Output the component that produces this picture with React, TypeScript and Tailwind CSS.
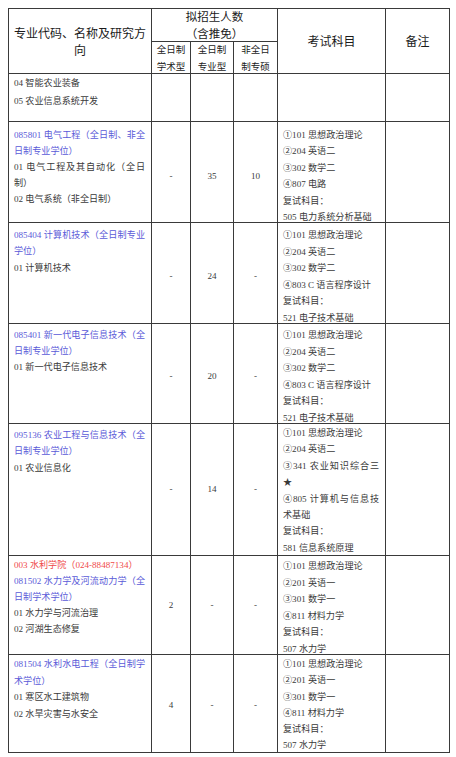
import React from "react";

type Line = { t: string; c?: "blue" | "red"; j?: boolean };
type Row = {
  h: string;
  left: Line[];
  leftCls: string;
  subj: Line[];
  subjCls: string;
  nums: [string, string, string];
  numCls: string;
};

const S1: Line[] = [
  { t: "①101 思想政治理论" },
  { t: "②204 英语二" },
  { t: "③302 数学二" },
];

const S6: Line[] = [
  { t: "①101 思想政治理论" },
  { t: "②201 英语一" },
  { t: "③301 数学一" },
  { t: "④811 材料力学" },
  { t: "复试科目：" },
  { t: "507 水力学" },
];

const rows: Row[] = [
  {
    h: "h-[47px]",
    left: [{ t: "04 智能农业装备" }, { t: "05 农业信息系统开发" }],
    leftCls: "pt-0 leading-[18px]",
    subj: [],
    subjCls: "",
    nums: ["", "", ""],
    numCls: "",
  },
  {
    h: "h-[100px]",
    left: [
      { t: "085801 电气工程（全日制、非全", c: "blue", j: true },
      { t: "日制专业学位）", c: "blue" },
      { t: "01 电气工程及其自动化（全日", j: true },
      { t: "制）" },
      { t: "02 电气系统（非全日制）" },
    ],
    leftCls: "pt-[4.5px] leading-[16px]",
    subj: [...S1, { t: "④807 电路" }, { t: "复试科目：" }, { t: "505 电力系统分析基础" }],
    subjCls: "pt-[4.5px] leading-[16.5px]",
    nums: ["-", "35", "10"],
    numCls: "pt-[9px]",
  },
  {
    h: "h-[100px]",
    left: [
      { t: "085404 计算机技术（全日制专业", c: "blue", j: true },
      { t: "学位）", c: "blue" },
      { t: "01 计算机技术" },
    ],
    leftCls: "pt-[4px] leading-[16.4px]",
    subj: [...S1, { t: "④803 C 语言程序设计" }, { t: "复试科目：" }, { t: "521 电子技术基础" }],
    subjCls: "pt-[4px] leading-[16.6px]",
    nums: ["-", "24", "-"],
    numCls: "pt-[7px]",
  },
  {
    h: "h-[99px]",
    left: [
      { t: "085401 新一代电子信息技术（全", c: "blue", j: true },
      { t: "日制专业学位）", c: "blue" },
      { t: "01 新一代电子信息技术" },
    ],
    leftCls: "pt-[3px] leading-[16px]",
    subj: [...S1, { t: "④803 C 语言程序设计" }, { t: "复试科目：" }, { t: "521 电子技术基础" }],
    subjCls: "pt-[3px] leading-[16.6px]",
    nums: ["-", "20", "-"],
    numCls: "pt-[6px]",
  },
  {
    h: "h-[131px]",
    left: [
      { t: "095136 农业工程与信息技术（全", c: "blue", j: true },
      { t: "日制专业学位）", c: "blue" },
      { t: "01 农业信息化" },
    ],
    leftCls: "pt-[2.5px] leading-[16.6px]",
    subj: [
      { t: "①101 思想政治理论" },
      { t: "②204 英语二" },
      { t: "③341 农业知识综合三", j: true },
      { t: "★" },
      { t: "④805 计算机与信息技", j: true },
      { t: "术基础" },
      { t: "复试科目：" },
      { t: "581 信息系统原理" },
    ],
    subjCls: "pt-[1px] leading-[16.4px]",
    nums: ["-", "14", "-"],
    numCls: "pt-[1px]",
  },
  {
    h: "h-[98px]",
    left: [
      { t: "003 水利学院（024-88487134）", c: "red" },
      { t: "081502 水力学及河流动力学（全", c: "blue", j: true },
      { t: "日制学术学位）", c: "blue" },
      { t: "01 水力学与河流治理" },
      { t: "02 河湖生态修复" },
    ],
    leftCls: "pt-[0.5px] leading-[16px]",
    subj: S6,
    subjCls: "pt-[2px] leading-[16.6px]",
    nums: ["2", "-", "-"],
    numCls: "pt-[2px]",
  },
  {
    h: "h-[97px]",
    left: [
      { t: "081504 水利水电工程（全日制学", c: "blue", j: true },
      { t: "术学位）", c: "blue" },
      { t: "01 寒区水工建筑物" },
      { t: "02 水旱灾害与水安全" },
    ],
    leftCls: "pt-[1px] leading-[16.5px]",
    subj: S6,
    subjCls: "pt-[1px] leading-[16.3px]",
    nums: ["4", "-", "-"],
    numCls: "pt-[4px]",
  },
];

function Lines({ lines }: { lines: Line[] }) {
  return (
    <>
      {lines.map((l, i) => (
        <div
          key={i}
          className={
            "whitespace-nowrap " +
            (l.c === "blue" ? "text-[#5a5ad8] " : l.c === "red" ? "text-[#ef4a4a] " : "text-[#3a3a3a] ") +
            (l.j ? "text-justify [text-align-last:justify]" : "text-left")
          }
        >
          {l.t}
        </div>
      ))}
    </>
  );
}

const cell = "border border-[#3a3a3a] p-0";
const head = "font-['Noto_Sans_CJK_SC',sans-serif] text-[#1a1a1a] font-normal";

export default function App() {
  return (
    <div className="bg-white w-[456px] h-[757px] pt-[8px] pl-[8px] font-['Liberation_Serif','Noto_Sans_CJK_SC',serif] text-[9.1px]">
      <table className="border-collapse table-fixed w-[441px]">
        <colgroup>
          <col className="w-[143px]" />
          <col className="w-[39px]" />
          <col className="w-[43px]" />
          <col className="w-[44px]" />
          <col className="w-[108px]" />
          <col className="w-[64px]" />
        </colgroup>
        <thead>
          <tr>
            <td rowSpan={2} className={cell + " align-middle text-center text-[12px] leading-[17.5px] " + head}>
              <div>专业代码、名称及研究方</div>
              <div>向</div>
            </td>
            <td colSpan={3} className={cell + " align-middle text-center text-[11.5px] " + head}>
              <div className="h-[32px] flex flex-col justify-center leading-[16.7px]">
                <div>拟招生人数</div>
                <div>（含推免）</div>
              </div>
            </td>
            <td rowSpan={2} className={cell + " align-middle text-center text-[12px] " + head}>
              考试科目
            </td>
            <td rowSpan={2} className={cell + " align-middle text-center text-[12px] " + head}>
              备注
            </td>
          </tr>
          <tr>
            {[
              ["全日制", "学术型"],
              ["全日制", "专业型"],
              ["非全日", "制专硕"],
            ].map((p, i) => (
              <td key={i} className={cell + " align-middle text-center text-[9.5px] " + head}>
                <div className="h-[31px] flex flex-col justify-center leading-[17px]">
                  <div>{p[0]}</div>
                  <div>{p[1]}</div>
                </div>
              </td>
            ))}
          </tr>
        </thead>
        <tbody>
          {rows.map((r, ri) => (
            <tr key={ri}>
              <td className={cell + " align-top"}>
                <div className={r.h + " overflow-visible pl-[5px] pr-[6px] " + r.leftCls}>
                  <Lines lines={r.left} />
                </div>
              </td>
              {r.nums.map((n, ni) => (
                <td key={ni} className={cell + " align-top"}>
                  <div className={r.h + " flex items-center justify-center text-[#3a3a3a] " + r.numCls}>{n}</div>
                </td>
              ))}
              <td className={cell + " align-top"}>
                <div className={r.h + " overflow-visible pl-[5px] pr-[6px] " + r.subjCls}>
                  <Lines lines={r.subj} />
                </div>
              </td>
              <td className={cell + " align-top"}>
                <div className={r.h}></div>
              </td>
            </tr>
          ))}
        </tbody>
      </table>
    </div>
  );
}
